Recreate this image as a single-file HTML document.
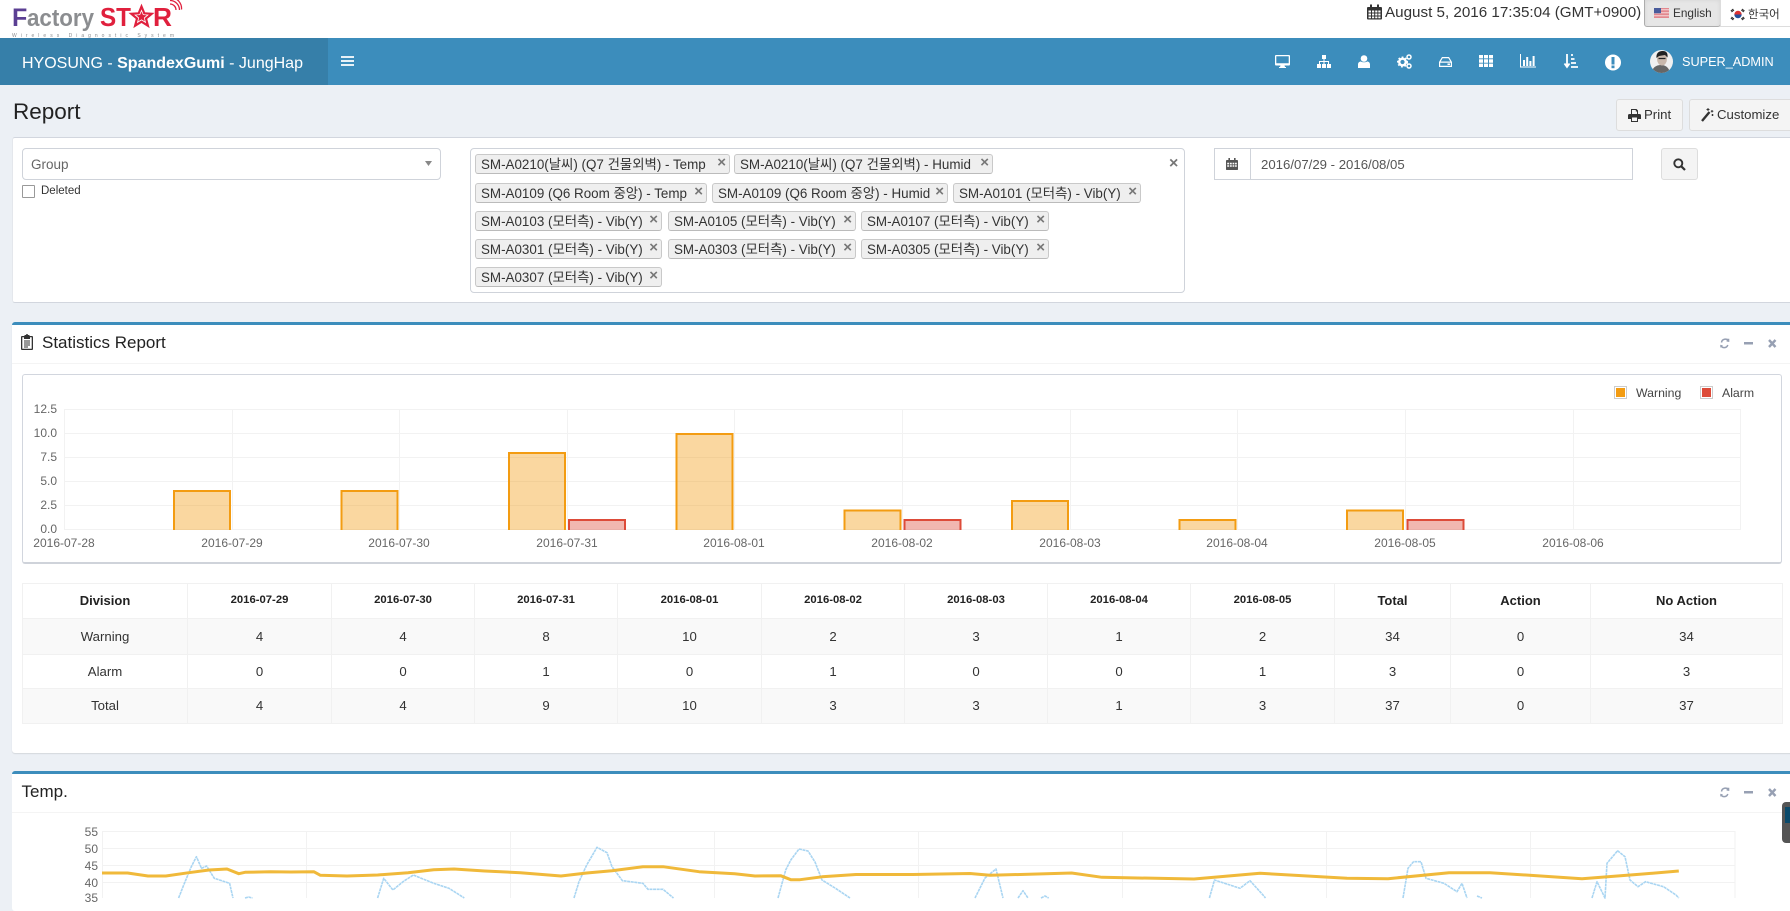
<!DOCTYPE html>
<html lang="en"><head><meta charset="utf-8"><title>Report</title>
<style>
html,body{margin:0;padding:0;background:#ecf0f5}
body{width:1790px;height:898px;overflow:hidden;position:relative;font-family:"Liberation Sans","Noto Sans CJK KR",sans-serif;color:#333}
.a{position:absolute;white-space:nowrap}
.box{position:absolute;box-sizing:border-box;background:#fff}
svg{position:absolute;overflow:visible}
.t{position:absolute;box-sizing:border-box;height:20px;background:#efefef;border:1px solid #c9c9c9;border-bottom-color:#bbb;border-radius:3px;font-size:13.4px;line-height:20px;padding-left:5px;white-space:nowrap;color:#333;overflow:hidden}
.t i{position:absolute;right:3px;top:-2px;font-style:normal;font-weight:bold;color:#777;font-size:15px}
.btn{position:absolute;box-sizing:border-box;background:#f4f4f4;border:1px solid #ddd;border-radius:3px}
table{position:absolute;left:22px;top:583px;width:1760px;height:140px;border-collapse:collapse;table-layout:fixed;font-size:13.2px;text-align:center;color:#333;background:#fff}
td,th{border:1px solid #f1f1f1;padding:0 0 1px 0;overflow:hidden}
th{font-size:13px;font-weight:bold;color:#222;padding-bottom:2px}
th.d{font-size:11.3px}
tr.s td{background:#f9f9f9}
.yl{position:absolute;right:auto;font-size:12px;color:#666;text-align:right;width:40px;line-height:14px}
.xl{position:absolute;font-size:12px;color:#666;width:80px;text-align:center;line-height:14px;top:536px}
</style></head><body>

<!-- top bar -->
<div class="box" style="left:0;top:0;width:1790px;height:38px"></div>
<svg style="left:0;top:0" width="190" height="38" viewBox="0 0 190 38">
<text x="12" y="26" font-family="Liberation Sans" font-size="25" font-weight="bold" fill="#5b3f93">F</text>
<text x="27" y="26" font-family="Liberation Sans" font-size="24" fill="#8b8d90" font-weight="bold" textLength="67" lengthAdjust="spacingAndGlyphs">actory</text>
<text x="100" y="26" font-family="Liberation Sans" font-size="26" font-weight="bold" fill="#e0203d" textLength="31" lengthAdjust="spacingAndGlyphs">ST</text>
<path d="M141.500 6.500l2.800 6.800 7.400.5-5.700 4.700 1.900 7.200-6.400-4-6.400 4 1.900-7.200-5.700-4.700 7.400-.5z" fill="#fff" stroke="#e0203d" stroke-width="2.200"/>
<path d="M141.500 11.500l1.500 3.500 3.800.3-2.900 2.400.9 3.700-3.300-2-3.300 2 .9-3.700-2.900-2.400 3.800-.3z" fill="#e0203d"/>
<text x="153" y="26" font-family="Liberation Sans" font-size="26" font-weight="bold" fill="#e0203d" textLength="19" lengthAdjust="spacingAndGlyphs">R</text>
<path d="M170 4a6 6 0 0 1 6 6M170 0.500a9.500 9.500 0 0 1 9.500 9.500M171 -2.500a11 11 0 0 1 10.500 12" fill="none" stroke="#e0203d" stroke-width="1.300"/>
<text x="12" y="37" font-family="Liberation Sans" font-size="5" fill="#8b8d90" textLength="162">Wireless Diagnostic System</text>
</svg>

<svg style="left:1367px;top:4px" width="15" height="16" viewBox="0 0 15 16"><path d="M1 3h13a1 1 0 0 1 1 1v10.500a1 1 0 0 1-1 1H1a1 1 0 0 1-1-1V4a1 1 0 0 1 1-1z" fill="#333"/><rect x="3" y="0.500" width="2" height="4" fill="#333"/><rect x="10" y="0.500" width="2" height="4" fill="#333"/><path d="M1.500 6.500h2.500v2h-2.500zM5 6.500h2.200v2H5zM8.200 6.500h2.200v2H8.200zM11.300 6.500h2.200v2h-2.200zM1.500 9.500h2.500v2h-2.500zM5 9.500h2.200v2H5zM8.200 9.500h2.200v2H8.200zM11.300 9.500h2.200v2h-2.200zM1.500 12.500h2.500v1.700h-2.500zM5 12.500h2.200v1.700H5zM8.200 12.500h2.200v1.700H8.200zM11.300 12.500h2.200v1.700h-2.200z" fill="#fff"/></svg>
<div class="a" style="left:1385px;top:2px;font-size:15.200px;line-height:21px;color:#333">August 5, 2016 17:35:04 (GMT+0900)</div>

<div class="box" style="left:1644px;top:-3px;width:77px;height:30px;background:#e6e6e6;border:1px solid #adadad;border-radius:3px;box-shadow:inset 0 2px 4px rgba(0,0,0,.08)"></div>
<div class="box" style="left:1720px;top:-3px;width:72px;height:30px;background:#fff;border:1px solid #ddd"></div>
<svg style="left:1654px;top:8px" width="15" height="10" viewBox="0 0 15 10"><rect width="15" height="10" fill="#fff"/><path d="M0 .7h15M0 2.200h15M0 3.700h15M0 5.200h15M0 6.700h15M0 8.200h15M0 9.600h15" stroke="#d9606a" stroke-width=".8"/><rect width="7" height="5.300" fill="#4a5c9c"/></svg>
<div class="a" style="left:1673px;top:6px;font-size:11.800px;line-height:15px;color:#333">English</div>
<svg style="left:1730px;top:8px" width="16" height="13" viewBox="0 0 16 13"><rect width="16" height="13" fill="#fff"/><path d="M4.300 6.500a3.700 3.700 0 0 1 7.400 0z" fill="#d33"/><path d="M4.300 6.500a3.700 3.700 0 0 0 7.400 0z" fill="#24509c"/><path d="M.8 3l2.500-2M1.500 4l2.500-2M12 1l2.500 2M11.300 2l2.500 2M.8 10l2.500 2M1.500 9l2.500 2M12 12l2.500-2M11.300 11l2.500-2" stroke="#222" stroke-width="1"/></svg>
<div class="a" style="left:1748px;top:8px;font-size:11.500px;line-height:15px;color:#333;font-family:'Liberation Sans','Noto Sans CJK KR',sans-serif">한국어</div>

<!-- nav -->
<div class="box" style="left:0;top:38px;width:1790px;height:47px;background:#3c8dbc"></div>
<div class="box" style="left:0;top:38px;width:328px;height:47px;background:#367fa9"></div>
<div class="a" style="left:22px;top:53.500px;font-size:16px;line-height:20px;color:#fff">HYOSUNG - <b>SpandexGumi</b> - JungHap</div>
<svg style="left:341px;top:56px" width="13" height="10" viewBox="0 0 13 10"><path d="M0 1h13M0 5h13M0 9h13" stroke="#fff" stroke-width="1.700"/></svg>

<!-- nav icons -->
<svg style="left:1275px;top:55px" width="15" height="13" viewBox="0 0 15 13"><path fill-rule="evenodd" d="M1 0h13a1 1 0 0 1 1 1v8.500a1 1 0 0 1-1 1H9.500l.5 1.500h1v1H4v-1h1l.5-1.500H1a1 1 0 0 1-1-1V1a1 1 0 0 1 1-1zM1.300 1.300v6.900h12.400V1.300z" fill="#fff"/></svg>
<svg style="left:1317px;top:55px" width="14" height="13" viewBox="0 0 14 13"><path d="M5 0h4v4H7.500v2H12v3h2v4h-4V9h1V7H7.500v2H9v4H5V9h1.500V7H3v2h1v4H0V9h2V6h4.500V4H5z" fill="#fff"/></svg>
<svg style="left:1358px;top:55px" width="12" height="13" viewBox="0 0 12 13"><circle cx="6" cy="3.500" r="3.300" fill="#fff"/><path d="M0 13V9.500C0 7.500 1.500 6.500 3 6.500 4 7.500 8 7.500 9 6.500c1.500 0 3 1 3 3V13z" fill="#fff"/></svg>
<svg style="left:1397px;top:54px" width="15" height="15" viewBox="0 0 15 15"><circle cx="5.500" cy="8" r="3.300" fill="none" stroke="#fff" stroke-width="2.400"/><circle cx="5.500" cy="8" r="4.800" fill="none" stroke="#fff" stroke-width="1.400" stroke-dasharray="1.800 1.800"/><circle cx="12" cy="3" r="2" fill="none" stroke="#fff" stroke-width="1.500"/><circle cx="12" cy="12" r="2" fill="none" stroke="#fff" stroke-width="1.500"/></svg>
<svg style="left:1439px;top:56px" width="13" height="12" viewBox="0 0 13 12"><path fill-rule="evenodd" d="M3 1h7l3 5v5H0V6zM3.600 2.200L1.700 5.500h9.600L9.400 2.200zM1.200 6.800v3h10.600v-3zM8.500 7.500h2.500v1.500H8.500z" fill="#fff"/></svg>
<svg style="left:1479px;top:55px" width="14" height="12" viewBox="0 0 14 12"><path d="M0 0h4v3.400H0zM5 0h4v3.400H5zM10 0h4v3.400h-4zM0 4.300h4v3.400H0zM5 4.300h4v3.400H5zM10 4.300h4v3.400h-4zM0 8.600h4V12H0zM5 8.600h4V12H5zM10 8.600h4V12h-4z" fill="#fff"/></svg>
<svg style="left:1520px;top:54px" width="16" height="14" viewBox="0 0 16 14"><path d="M.5 0v13H16" fill="none" stroke="#fff"/><path d="M3 6h2v6H3zM6.200 3h2v9h-2zM9.400 7h2v5h-2zM12.600 2h2v10h-2z" fill="#fff"/></svg>
<svg style="left:1564px;top:54px" width="14" height="15" viewBox="0 0 14 15"><path d="M3 0v12M.5 9.500L3 13l2.500-3.500" fill="none" stroke="#fff" stroke-width="1.800"/><path d="M7 1h2M7 5h3.500M7 9h5M7 13h7" stroke="#fff" stroke-width="1.800"/></svg>
<svg style="left:1605px;top:54px" width="16" height="17" viewBox="0 0 16 17"><circle cx="8" cy="8.500" r="8" fill="#fff"/><rect x="6.500" y="3" width="3" height="7.500" fill="#3c8dbc"/><rect x="6.500" y="11.500" width="3" height="2.700" fill="#3c8dbc"/></svg>
<svg style="left:1650px;top:50px" width="23" height="23" viewBox="0 0 23 23"><defs><clipPath id="av"><circle cx="11.500" cy="11.500" r="11.500"/></clipPath></defs><g clip-path="url(#av)"><rect width="23" height="23" fill="#f0f0f0"/><path d="M2 23c0-6 5-8 9-8s8 2 9 8z" fill="#666"/><ellipse cx="12" cy="9" rx="5" ry="6.500" fill="#c9b8ac"/><path d="M6.500 8C6 2 10 1 13 1c4 0 5 3 4.500 6.500L15 5l-6 1z" fill="#222"/><path d="M8.500 8.500h7" stroke="#222" stroke-width="1.300"/></g></svg>
<div class="a" style="left:1682px;top:54px;font-size:12.700px;line-height:16px;color:#fff">SUPER_ADMIN</div>

<!-- page header -->
<div class="a" style="left:13px;top:98px;font-size:22.500px;line-height:28px;color:#222">Report</div>
<div class="btn" style="left:1616px;top:99px;width:67px;height:32px"></div>
<svg style="left:1628px;top:109px" width="13" height="13" viewBox="0 0 13 13"><path fill-rule="evenodd" d="M3 0h5.500L10 1.500V5h1.500A1.500 1.500 0 0 1 13 6.500V10h-3v3H3v-3H0V6.500A1.500 1.500 0 0 1 1.500 5H3zM4 1v4h5V2.500H7.800V1zM4 8.500V12h5V8.500z" fill="#333"/></svg>
<div class="a" style="left:1644px;top:107px;font-size:13.200px;line-height:16px;color:#333">Print</div>
<div class="btn" style="left:1689px;top:99px;width:104px;height:32px"></div>
<svg style="left:1701px;top:108px" width="13" height="14" viewBox="0 0 13 14"><path d="M1 13L8.500 4" stroke="#333" stroke-width="2.400"/><path d="M7 0v3M5.500 1.500h3M11 2v2.500M9.800 3.200h2.500M11.500 6v2M10.500 7h2" stroke="#333" stroke-width="1"/></svg>
<div class="a" style="left:1717px;top:107px;font-size:13.200px;line-height:16px;color:#333">Customize</div>

<!-- filter panel -->
<div class="box" style="left:12px;top:137px;width:1790px;height:166px;border-top:1px solid #d2d6de;border-bottom:1px solid #d2d6de;border-left:1px solid #e4e7ec;border-radius:3px"></div>
<div class="box" style="left:22px;top:148px;width:419px;height:32px;border:1px solid #cfd3da;border-radius:4px"></div>
<div class="a" style="left:31px;top:157px;font-size:13.500px;line-height:16px;color:#666">Group</div>
<svg style="left:425px;top:161px" width="7" height="5" viewBox="0 0 7 5"><path d="M0 0h7L3.500 5z" fill="#888"/></svg>
<div class="box" style="left:22px;top:185px;width:13px;height:13px;border:1px solid #999;border-radius:1px"></div>
<div class="a" style="left:41px;top:184px;font-size:11.500px;line-height:14px;color:#333">Deleted</div>

<div class="box" style="left:470px;top:148px;width:715px;height:145px;border:1px solid #cfd3da;border-radius:4px"></div>
<div class="t" style="left:475px;top:154px;width:255px">SM-A0210(날씨) (Q7 건물외벽) - Temp<i>×</i></div>
<div class="t" style="left:734px;top:154px;width:259px">SM-A0210(날씨) (Q7 건물외벽) - Humid<i>×</i></div>
<div class="t" style="left:475px;top:183px;width:232px">SM-A0109 (Q6 Room 중앙) - Temp<i>×</i></div>
<div class="t" style="left:712px;top:183px;width:236px">SM-A0109 (Q6 Room 중앙) - Humid<i>×</i></div>
<div class="t" style="left:953px;top:183px;width:188px">SM-A0101 (모터측) - Vib(Y)<i>×</i></div>
<div class="t" style="left:475px;top:211px;width:187px">SM-A0103 (모터측) - Vib(Y)<i>×</i></div>
<div class="t" style="left:668px;top:211px;width:188px">SM-A0105 (모터측) - Vib(Y)<i>×</i></div>
<div class="t" style="left:861px;top:211px;width:188px">SM-A0107 (모터측) - Vib(Y)<i>×</i></div>
<div class="t" style="left:475px;top:239px;width:187px">SM-A0301 (모터측) - Vib(Y)<i>×</i></div>
<div class="t" style="left:668px;top:239px;width:188px">SM-A0303 (모터측) - Vib(Y)<i>×</i></div>
<div class="t" style="left:861px;top:239px;width:188px">SM-A0305 (모터측) - Vib(Y)<i>×</i></div>
<div class="t" style="left:475px;top:267px;width:187px">SM-A0307 (모터측) - Vib(Y)<i>×</i></div>
<div class="a" style="left:1169px;top:155px;font-size:16px;font-weight:bold;line-height:18px;color:#777">×</div>

<div class="box" style="left:1214px;top:148px;width:419px;height:32px;border:1px solid #cfd3da"></div>
<div class="box" style="left:1250px;top:148px;width:1px;height:32px;background:#cfd3da"></div>
<svg style="left:1226px;top:157px" width="12" height="14" viewBox="0 0 15 16"><path d="M1 3h13a1 1 0 0 1 1 1v10.500a1 1 0 0 1-1 1H1a1 1 0 0 1-1-1V4a1 1 0 0 1 1-1z" fill="#555"/><rect x="3" y="0.500" width="2" height="4" fill="#555"/><rect x="10" y="0.500" width="2" height="4" fill="#555"/><path d="M1.500 6.500h2.500v2h-2.500zM5 6.500h2.200v2H5zM8.200 6.500h2.200v2H8.200zM11.300 6.500h2.200v2h-2.200zM1.500 9.500h2.500v2h-2.500zM5 9.500h2.200v2H5zM8.200 9.500h2.200v2H8.200zM11.300 9.500h2.200v2h-2.200z" fill="#fff"/></svg>
<div class="a" style="left:1261px;top:157px;font-size:13.200px;line-height:16px;color:#555">2016/07/29 - 2016/08/05</div>
<div class="btn" style="left:1661px;top:148px;width:37px;height:32px"></div>
<svg style="left:1673px;top:158px" width="13" height="13" viewBox="0 0 13 13"><circle cx="5.300" cy="5.300" r="4" fill="none" stroke="#333" stroke-width="1.900"/><path d="M8.300 8.300L12 12" stroke="#333" stroke-width="2.200"/></svg>

<!-- statistics panel -->
<div class="box" style="left:12px;top:322px;width:1790px;height:431px;border-top:3px solid #3c8dbc;border-radius:3px;box-shadow:0 1px 1px rgba(0,0,0,.1)"></div>
<div class="box" style="left:12px;top:363px;width:1778px;height:1px;background:#f4f4f4"></div>
<svg style="left:21px;top:334px" width="12" height="16" viewBox="0 0 12 16"><path fill-rule="evenodd" d="M1 2h2.500V1h1.500a1 1 0 0 1 2 0h1.500v1H11a1 1 0 0 1 1 1v12a1 1 0 0 1-1 1H1a1 1 0 0 1-1-1V3a1 1 0 0 1 1-1zM1.300 3.300v11.400h9.400V3.300H9V5H3V3.300z" fill="#333"/><path d="M3 7h6M3 9h6M3 11h6M3 13h4" stroke="#333"/></svg>
<div class="a" style="left:42px;top:332px;font-size:17px;line-height:21px;color:#222">Statistics Report</div>
<svg style="left:1720px;top:338px" width="58" height="11" viewBox="0 0 58 11"><path d="M8.500 3A3.800 3.800 0 0 0 1.500 4.500M.8 7.500A3.800 3.800 0 0 0 7.800 7" fill="none" stroke="#97a0b3" stroke-width="1.500"/><path d="M7 .8L9.300 .8 9.300 4 6.500 3.500zM.3 9.800L.3 6.800 3 7.500z" fill="#97a0b3"/><rect x="24" y="4" width="9" height="2.500" fill="#97a0b3"/><path d="M49 2l6.500 7M55.500 2L49 9" stroke="#97a0b3" stroke-width="2.400"/></svg>

<!-- chart box -->
<div class="box" style="left:22px;top:374px;width:1760px;height:190px;border:1px solid #d2d6de;border-bottom:2px solid #cfd3da;border-radius:3px"></div>
<svg style="left:0;top:0" width="1790" height="898" viewBox="0 0 1790 898">
<g stroke="#f2f2f2" stroke-width="1" fill="none" shape-rendering="crispEdges">
<path d="M64 409.500H1741M64 433.500H1741M64 457.500H1741M64 481.500H1741M64 505.500H1741M64 529.500H1741"/>
<path d="M64.500 409V530M232.500 409V530M399.500 409V530M567.500 409V530M734.500 409V530M902.500 409V530M1070.500 409V530M1237.500 409V530M1405.500 409V530M1573.500 409V530M1740.500 409V530"/>
</g>
<g fill="rgba(243,156,18,.4)" stroke="#f39c12" stroke-width="2">
<path d="M174 530V491H230V530"/>
<path d="M341.500 530V491H397.500V530"/>
<path d="M509 530V453H565V530"/>
<path d="M676.500 530V434H732.500V530"/>
<path d="M844.500 530V510.500H900.500V530"/>
<path d="M1012 530V501H1068V530"/>
<path d="M1179.500 530V520H1235.500V530"/>
<path d="M1347 530V510.500H1403V530"/>
</g>
<g fill="rgba(221,75,57,.4)" stroke="#dd4b39" stroke-width="2">
<path d="M569 530V520H625V530"/>
<path d="M904.500 530V520H960.500V530"/>
<path d="M1407.500 530V520H1463.500V530"/>
</g>
</svg>

<div class="yl" style="left:17px;top:402px">12.5</div>
<div class="yl" style="left:17px;top:426px">10.0</div>
<div class="yl" style="left:17px;top:450px">7.5</div>
<div class="yl" style="left:17px;top:474px">5.0</div>
<div class="yl" style="left:17px;top:498px">2.5</div>
<div class="yl" style="left:17px;top:522px">0.0</div>
<div class="xl" style="left:24px">2016-07-28</div>
<div class="xl" style="left:192px">2016-07-29</div>
<div class="xl" style="left:359px">2016-07-30</div>
<div class="xl" style="left:527px">2016-07-31</div>
<div class="xl" style="left:694px">2016-08-01</div>
<div class="xl" style="left:862px">2016-08-02</div>
<div class="xl" style="left:1030px">2016-08-03</div>
<div class="xl" style="left:1197px">2016-08-04</div>
<div class="xl" style="left:1365px">2016-08-05</div>
<div class="xl" style="left:1533px">2016-08-06</div>

<div class="box" style="left:1614px;top:386px;width:13px;height:13px;border:1px solid #ccc;padding:1px"><div style="width:9px;height:9px;background:#f39c12"></div></div>
<div class="a" style="left:1636px;top:386px;font-size:12.300px;line-height:14px;color:#444">Warning</div>
<div class="box" style="left:1700px;top:386px;width:13px;height:13px;border:1px solid #ccc;padding:1px"><div style="width:9px;height:9px;background:#dd4b39"></div></div>
<div class="a" style="left:1722px;top:386px;font-size:12.300px;line-height:14px;color:#444">Alarm</div>

<table>
<colgroup><col style="width:165px"><col style="width:144px"><col style="width:143px"><col style="width:143px"><col style="width:144px"><col style="width:143px"><col style="width:143px"><col style="width:143px"><col style="width:144px"><col style="width:116px"><col style="width:140px"><col style="width:192px"></colgroup>
<tr style="height:35px"><th>Division</th><th class="d">2016-07-29</th><th class="d">2016-07-30</th><th class="d">2016-07-31</th><th class="d">2016-08-01</th><th class="d">2016-08-02</th><th class="d">2016-08-03</th><th class="d">2016-08-04</th><th class="d">2016-08-05</th><th>Total</th><th>Action</th><th>No Action</th></tr>
<tr class="s" style="height:36px"><td>Warning</td><td>4</td><td>4</td><td>8</td><td>10</td><td>2</td><td>3</td><td>1</td><td>2</td><td>34</td><td>0</td><td>34</td></tr>
<tr style="height:34px"><td>Alarm</td><td>0</td><td>0</td><td>1</td><td>0</td><td>1</td><td>0</td><td>0</td><td>1</td><td>3</td><td>0</td><td>3</td></tr>
<tr class="s" style="height:35px"><td>Total</td><td>4</td><td>4</td><td>9</td><td>10</td><td>3</td><td>3</td><td>1</td><td>3</td><td>37</td><td>0</td><td>37</td></tr>
</table>

<!-- temp panel -->
<div class="box" style="left:12px;top:771px;width:1790px;height:140px;border-top:3px solid #3c8dbc;border-radius:3px"></div>
<div class="box" style="left:12px;top:812px;width:1778px;height:1px;background:#f4f4f4"></div>
<div class="a" style="left:21.500px;top:781px;font-size:17px;line-height:21px;color:#222">Temp.</div>
<svg style="left:1720px;top:787px" width="58" height="11" viewBox="0 0 58 11"><path d="M8.500 3A3.800 3.800 0 0 0 1.500 4.500M.8 7.500A3.800 3.800 0 0 0 7.800 7" fill="none" stroke="#97a0b3" stroke-width="1.500"/><path d="M7 .8L9.300 .8 9.300 4 6.500 3.500zM.3 9.800L.3 6.800 3 7.500z" fill="#97a0b3"/><rect x="24" y="4" width="9" height="2.500" fill="#97a0b3"/><path d="M49 2l6.500 7M55.500 2L49 9" stroke="#97a0b3" stroke-width="2.400"/></svg>
<div class="yl" style="left:58px;top:825px">55</div>
<div class="yl" style="left:58px;top:842px">50</div>
<div class="yl" style="left:58px;top:859px">45</div>
<div class="yl" style="left:58px;top:876px">40</div>
<div class="yl" style="left:58px;top:891px">35</div>

<svg style="left:0;top:0" width="1790" height="898" viewBox="0 0 1790 898">
<g stroke="#f2f2f2" fill="none" shape-rendering="crispEdges">
<path d="M102 831.500H1735M102 848.500H1735M102 865.500H1735M102 882.500H1735"/>
<path d="M102.500 831V898M306.500 831V898M510.500 831V898M714.500 831V898M918.500 831V898M1122.500 831V898M1326.500 831V898M1530.500 831V898M1735 831V898"/>
</g>
<g fill="none" stroke="#a9d5f2" stroke-width="1.600" stroke-linejoin="round" stroke-dasharray="3 .6">
<polyline points="178.600,898 183.700,885 191.300,866.700 196.400,856.700 201.500,868.300 206.600,866 214.300,878.300 229.600,883.300 233,898"/>
<polyline points="245,898 248.500,897 252.500,898"/>
<polyline points="377.600,898 383.700,878.300 392.900,890 403,881.700 413.300,875 433.700,883.300 449,888.300 464.300,898"/>
<polyline points="574,898 579,881.700 586.700,865 597,847.300 607,852.700 612,866.700 622.400,880.700 642.900,883.300 648,889.300 663,889.300 673.500,898"/>
<polyline points="778,898 785.700,870 790.800,860 799,849 808,851 815,862 822,880 835,888 850,898"/>
<polyline points="975,898 985,878 996,869 1003,898"/>
<polyline points="1018,898 1023,890.700 1028,898"/>
<polyline points="1041,898 1045,896 1048.700,898"/>
<polyline points="1209.400,898 1214.500,880 1240,888.300 1250,880.700 1263,895 1265.500,898"/>
<polyline points="1403,898 1408,868.300 1413.500,861.700 1421,861.700 1426,878.300 1444,883.300 1457,891.700 1462,883.300 1467,898"/>
<polyline points="1477,896 1482,898"/>
<polyline points="1592,898 1597,881.700 1605,898 1607,863.300 1617.600,850.700 1625,856.700 1630,880 1638,886.700 1645.600,881.700 1663.500,886.700 1676,895 1678.800,898"/>
</g>
<polyline fill="none" stroke="#f0b93a" stroke-width="3" stroke-linejoin="round" points="102,873 127.600,873 148,876 165.800,876 188.800,872.700 209,870 227,869 238.800,873.700 245,872.300 270.400,871.700 290.800,872 313.800,871.700 320.400,875.300 347,876 377.600,875 408,872.700 433.700,869.700 454,869 484.700,871 520.400,872.700 561,876 586.700,873 612,870.700 642.900,866.700 663,866.700 699,871.700 734.700,873.700 755,876 780.600,875.700 790.800,879.700 800,879.700 822,876.800 856,874.500 913,874.500 970,873.500 990,875.300 1071.600,873 1102,877.300 1194,879 1260,873.300 1347,878.300 1388,878.700 1449,872.700 1490,872.700 1582,878.700 1643,874 1678.800,871"/>
</svg>

<div class="box" style="left:1782px;top:802px;width:12px;height:41px;background:#555;border-radius:4px 0 0 4px"></div>
<div class="box" style="left:1785px;top:807px;width:5px;height:16px;background:#0b4a6b"></div>

</body></html>
